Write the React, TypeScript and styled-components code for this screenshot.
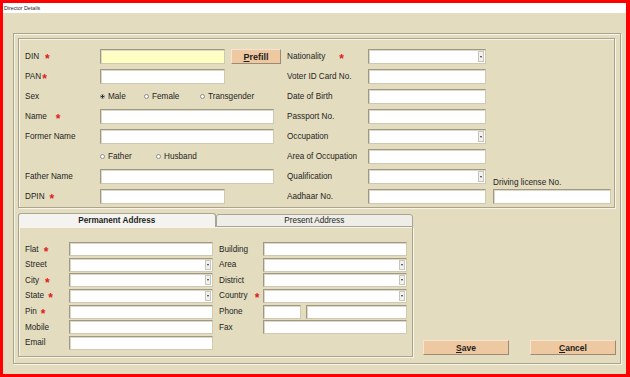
import React from "react";
import styled, { createGlobalStyle } from "styled-components";

const GlobalStyle = createGlobalStyle`
	html, body {
		margin: 0;
		padding: 0;
	}
	body {
		width: 630px;
		height: 377px;
		overflow: hidden;
		font-family: "Liberation Sans", Arial, sans-serif;
	}
	* {
		box-sizing: border-box;
	}
`;

const BEIGE = "#e4dcbf";

const Window = styled.div`
	width: 630px;
	height: 377px;
	border: 3px solid #ff0000;
	border-right-width: 4px;
	display: flex;
	flex-direction: column;
	background: ${BEIGE};
`;

const TitleBar = styled.div`
	height: 10px;
	background: #ffffff;
	font-size: 5.3px;
	line-height: 10px;
	padding-left: 1px;
	color: #222;
`;

const Body = styled.div`
	flex: 1;
	display: flex;
	padding: 20px 5px 10px 10px;
`;

const Etched = styled.div`
	border: 1px solid #aaa38d;
	box-shadow: inset 1px 1px 0 #f7f4ea, 1px 1px 0 #f7f4ea;
`;

const OuterFrame = styled(Etched)`
	flex: 1;
	display: flex;
	flex-direction: column;
	padding: 4px 5px 4px 4px;
`;

const TopBox = styled(Etched)`
	height: 170px;
	padding: 10px 0 0 6px;
	display: grid;
	grid-template-columns: 75px 187px 81px 125px 118px;
	grid-auto-rows: 15px;
	row-gap: 5px;
	align-items: center;
`;

const Cell = styled.div`
	display: flex;
	align-items: center;
	height: 15px;
`;

const Label = styled.span`
	font-size: 8.2px;
	color: #1e1e1e;
	display: flex;
	align-items: center;
	white-space: nowrap;
`;

const DrivingCell = styled.div`
	grid-column: 5;
	grid-row: 7 / span 2;
	align-self: stretch;
	display: flex;
	flex-direction: column;
	justify-content: flex-end;
	gap: 2px;
`;

const Star = styled.span<{ $gap: number }>`
	color: #e02020;
	font-weight: bold;
	font-size: 12px;
	line-height: 8px;
	margin-left: ${(p) => p.$gap}px;
	position: relative;
	top: 2.5px;
`;

const Field = styled.div<{ $w: number; $bg?: string; $h?: number }>`
	width: ${(p) => p.$w}px;
	height: ${(p) => p.$h ?? 15}px;
	background: ${(p) => p.$bg ?? "#ffffff"};
	border: 1px solid #9f9882;
	border-right-color: #cfc8b2;
	border-bottom-color: #cfc8b2;
	box-shadow: inset 1px 1px 0 #dcd7c8;
	display: flex;
	justify-content: flex-end;
	align-items: stretch;
	flex-shrink: 0;
`;

const DropBox = styled.div`
	width: 6px;
	margin: 1px;
	background: #f1f0ec;
	border: 1px solid #c8c5bb;
	display: flex;
	align-items: center;
	justify-content: center;

	&::after {
		content: "";
		width: 0;
		height: 0;
		border-left: 1.5px solid transparent;
		border-right: 1.5px solid transparent;
		border-top: 2px solid #333;
	}
`;

const PeachButton = styled.div<{ $w: number; $size: number }>`
	width: ${(p) => p.$w}px;
	height: 15px;
	background: #eec8a1;
	border: 1px solid #f7e3cf;
	border-right-color: #9d8a74;
	border-bottom-color: #9d8a74;
	display: flex;
	align-items: center;
	justify-content: center;
	font-weight: bold;
	font-size: ${(p) => p.$size}px;
	color: #1d1d1d;

	u {
		text-decoration: underline;
	}
`;

const PrefillButton = styled(PeachButton)`
	margin-left: 6px;
`;

const RadioItem = styled.div<{ $w?: number }>`
	display: flex;
	align-items: center;
	width: ${(p) => (p.$w ? `${p.$w}px` : "auto")};
	font-size: 8.2px;
	color: #1e1e1e;
`;

const RadioDot = styled.span<{ $checked?: boolean }>`
	width: 5px;
	height: 5px;
	border-radius: 50%;
	border: 1px solid #8b8b8b;
	background: ${(p) => (p.$checked ? "radial-gradient(circle, #333 0 1px, #fff 1.2px)" : "#fff")};
	margin-right: 3px;
`;

const BottomArea = styled.div`
	flex: 1;
	display: flex;
	margin-top: 5px;
`;

const TabPanel = styled.div`
	width: 395px;
	display: flex;
	flex-direction: column;
`;

const TabHeader = styled.div`
	display: flex;
	height: 14px;
`;

const Tab = styled.div<{ $active?: boolean }>`
	flex: 1;
	background: ${(p) => (p.$active ? "#f4f3ef" : "#eeede8")};
	border: 1px solid #a8a596;
	border-bottom: ${(p) => (p.$active ? "none" : "1px solid #a8a596")};
	border-radius: 3px 3px 0 0;
	margin-top: ${(p) => (p.$active ? 0 : 1)}px;
	font-size: 8.2px;
	font-weight: ${(p) => (p.$active ? "bold" : "normal")};
	color: #1e1e1e;
	display: flex;
	align-items: center;
	justify-content: center;
`;

const TabBody = styled(Etched)`
	flex: 1;
	border-top: none;
	margin-bottom: 2px;
	padding: 15px 0 0 6px;
	display: grid;
	grid-template-columns: 44px 150px 44px 144px;
	grid-auto-rows: 14px;
	row-gap: 1.67px;
	align-items: center;
`;

const PhoneGroup = styled.div`
	display: flex;
	gap: 5px;
`;

const ButtonArea = styled.div`
	flex: 1;
	display: flex;
	align-items: flex-end;
	justify-content: space-between;
	padding: 0 0 4px 10px;
	margin-right: -1px;
`;

const Req = ({ text, gap }: { text: string; gap?: number }) => (
	<Label>
		{text}
		{gap !== undefined && <Star $gap={gap}>*</Star>}
	</Label>
);

const Input = ({ w, bg, h }: { w: number; bg?: string; h?: number }) => <Field $w={w} $bg={bg} $h={h} />;

const Select = ({ w, h }: { w: number; h?: number }) => (
	<Field $w={w} $h={h}>
		<DropBox />
	</Field>
);

const Radio = ({ text, w, checked }: { text: string; w?: number; checked?: boolean }) => (
	<RadioItem $w={w}>
		<RadioDot $checked={checked} />
		{text}
	</RadioItem>
);

export default function App() {
	return (
		<>
			<GlobalStyle />
			<Window>
				<TitleBar>Director Details</TitleBar>
				<Body>
					<OuterFrame>
						<TopBox>
							<Req text="DIN" gap={6} />
							<Cell>
								<Input w={125} bg="#ffffc4" />
								<PrefillButton $w={50} $size={9}>
									<u>P</u>refill
								</PrefillButton>
							</Cell>
							<Req text="Nationality" gap={14} />
							<Select w={118} />
							<span />

							<Req text="PAN" gap={1} />
							<Input w={125} />
							<Label>Voter ID Card No.</Label>
							<Input w={118} />
							<span />

							<Label>Sex</Label>
							<Cell>
								<Radio text="Male" w={44} checked />
								<Radio text="Female" w={56} />
								<Radio text="Transgender" />
							</Cell>
							<Label>Date of Birth</Label>
							<Input w={118} />
							<span />

							<Req text="Name" gap={9} />
							<Input w={174} />
							<Label>Passport No.</Label>
							<Input w={118} />
							<span />

							<Label>Former Name</Label>
							<Input w={174} />
							<Label>Occupation</Label>
							<Select w={118} />
							<span />

							<span />
							<Cell>
								<Radio text="Father" w={56} />
								<Radio text="Husband" />
							</Cell>
							<Label>Area of Occupation</Label>
							<Input w={118} />
							<span />

							<Label>Father Name</Label>
							<Input w={174} />
							<Label>Qualification</Label>
							<Select w={118} />
							<DrivingCell>
								<Label>Driving license No.</Label>
								<Input w={118} />
							</DrivingCell>

							<Req text="DPIN" gap={5} />
							<Input w={125} />
							<Label>Aadhaar No.</Label>
							<Input w={118} />
						</TopBox>

						<BottomArea>
							<TabPanel>
								<TabHeader>
									<Tab $active>Permanent Address</Tab>
									<Tab>Present Address</Tab>
								</TabHeader>
								<TabBody>
									<Req text="Flat" gap={5} />
									<Input w={144} h={14} />
									<Label>Building</Label>
									<Input w={144} h={14} />

									<Label>Street</Label>
									<Select w={144} h={14} />
									<Label>Area</Label>
									<Select w={144} h={14} />

									<Req text="City" gap={6} />
									<Select w={144} h={14} />
									<Label>District</Label>
									<Select w={144} h={14} />

									<Req text="State" gap={4} />
									<Select w={144} h={14} />
									<Req text="Country" gap={7} />
									<Select w={144} h={14} />

									<Req text="Pin" gap={4} />
									<Input w={144} h={14} />
									<Label>Phone</Label>
									<PhoneGroup>
										<Input w={38} h={14} />
										<Input w={101} h={14} />
									</PhoneGroup>

									<Label>Mobile</Label>
									<Input w={144} h={14} />
									<Label>Fax</Label>
									<Input w={144} h={14} />

									<Label>Email</Label>
									<Input w={144} h={14} />
								</TabBody>
							</TabPanel>
							<ButtonArea>
								<PeachButton $w={86} $size={8.5}>
									<u>S</u>ave
								</PeachButton>
								<PeachButton $w={86} $size={8.5}>
									<u>C</u>ancel
								</PeachButton>
							</ButtonArea>
						</BottomArea>
					</OuterFrame>
				</Body>
			</Window>
		</>
	);
}
